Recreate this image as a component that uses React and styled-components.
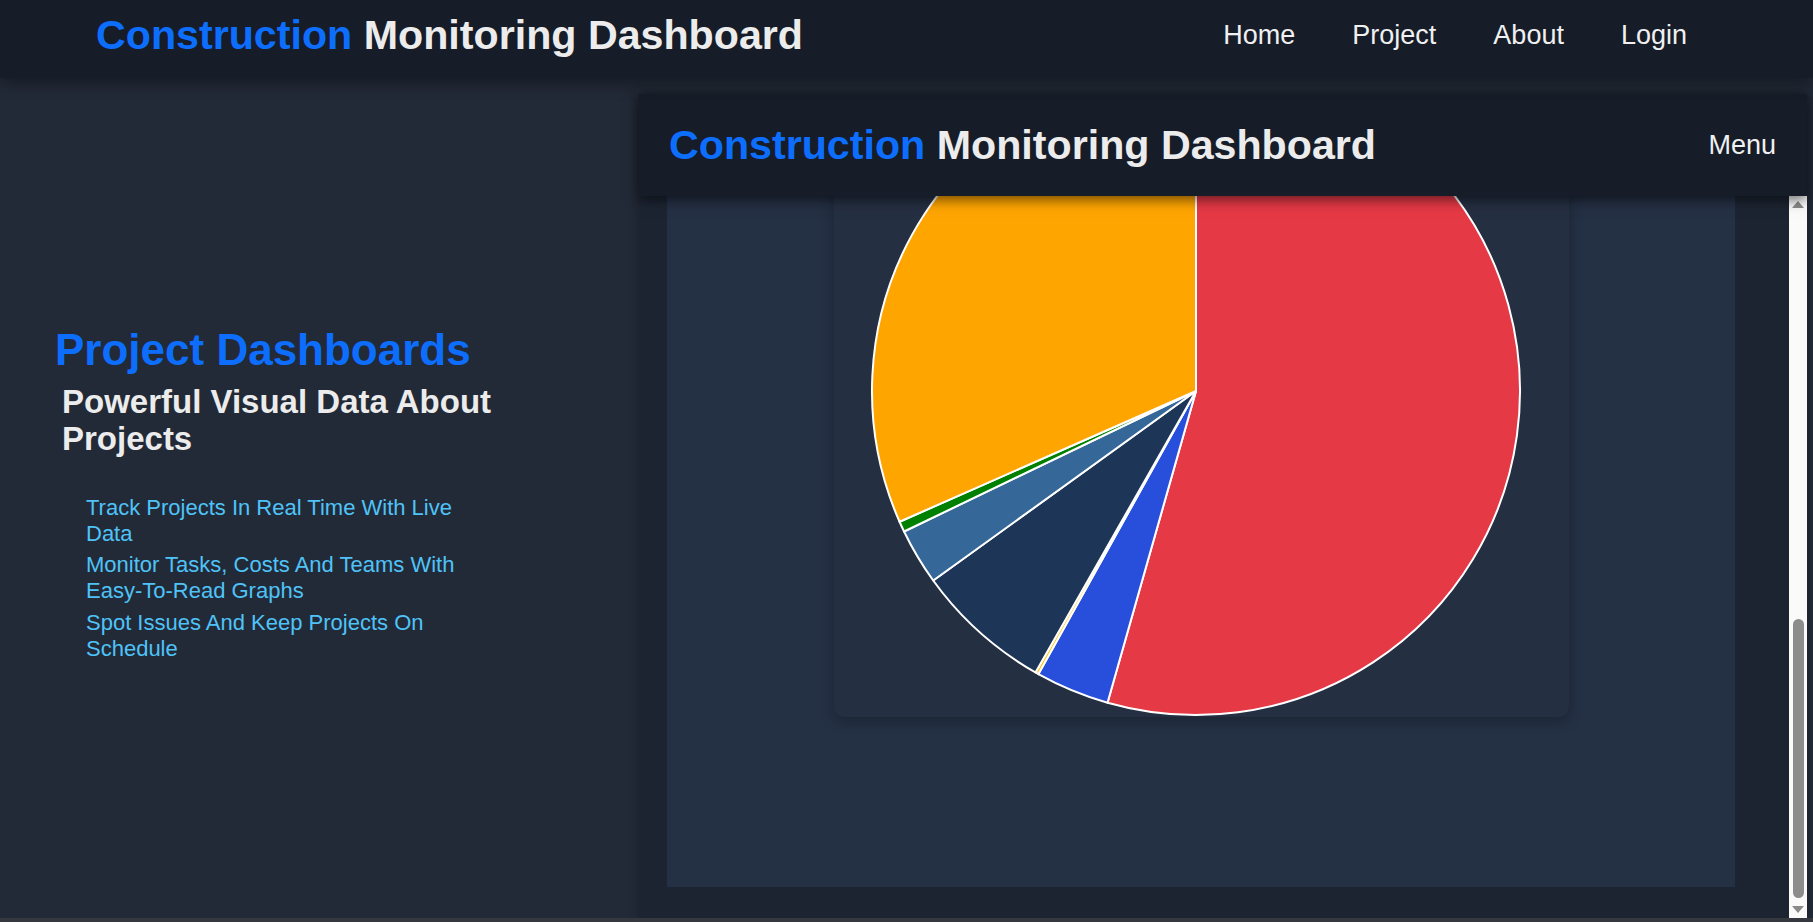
import React from 'react';
import styled, {createGlobalStyle} from 'styled-components';

const GlobalStyle = createGlobalStyle`
    html, body {
        margin: 0;
        padding: 0;
        height: 100%;
        overflow: hidden;
        background-color: #222a37;
        font-family: "Liberation Sans", Arial, Helvetica, sans-serif;
    }
    #root {
        height: 100%;
    }
`

const Page = styled.div`
    height: 100vh;
    display: flex;
    flex-direction: column;
`

const TopBar = styled.header`
    position: relative;
    z-index: 3;
    display: flex;
    justify-content: space-between;
    align-items: center;
    padding: 12px 126px 19px 96px;
    background-color: #161d29;
    box-shadow: 0 4px 16px rgba(0, 0, 0, 0.4);
`

const Brand = styled.h1`
    margin: 0;
    font-size: 41.2px;
    font-weight: bold;
    line-height: normal;
    color: #ececec;
    white-space: nowrap;
`

const Accent = styled.span`
    color: #0d6efd;
`

const NavList = styled.nav`
    display: flex;
    gap: 57px;
`

const NavLink = styled.a`
    font-size: 27px;
    line-height: 31px;
    color: #f0f0f0;
    text-decoration: none;
`

const Main = styled.main`
    flex: 1;
    min-height: 0;
    display: flex;
`

const Intro = styled.section`
    flex: none;
    width: 639px;
    box-sizing: border-box;
    padding: 247px 0 0 55px;
`

const Title = styled.h1`
    margin: 0;
    font-size: 44px;
    line-height: 50px;
    font-weight: bold;
    color: #0d6efd;
`

const Subtitle = styled.h2`
    margin: 8px 0 0 7px;
    max-width: 460px;
    font-size: 33px;
    line-height: 37px;
    font-weight: bold;
    color: #ececec;
`

const Features = styled.ul`
    list-style: none;
    margin: 38px 0 0 31px;
    padding: 0;
    width: 400px;
`

const Feature = styled.li`
    font-size: 22px;
    line-height: 25.7px;
    color: #4fc3f7;
    margin-bottom: 6px;
`

const Preview = styled.div`
    flex: 1;
    min-width: 0;
    margin: 16px 6px 0 0;
    display: flex;
    flex-direction: column;
    background-color: #1c2432;
    box-shadow: 0 0 10px rgba(0, 0, 0, 0.25);
`

const PreviewBar = styled.div`
    position: relative;
    z-index: 2;
    flex: none;
    height: 102px;
    display: flex;
    justify-content: space-between;
    align-items: center;
    padding: 0 31px 0 30px;
    background-color: #161d29;
    box-shadow: 0 4px 12px rgba(0, 0, 0, 0.55);
`

const MenuLabel = styled.span`
    font-size: 27px;
    line-height: 31px;
    color: #f0f0f0;
`

const PreviewBody = styled.div`
    flex: 1;
    min-height: 0;
    display: flex;
`

const Viewport = styled.div`
    flex: 1;
    min-width: 0;
    overflow: hidden;
    display: flex;
    flex-direction: column;
    justify-content: flex-end;
`

const ChartSection = styled.div`
    flex: none;
    margin: 0 54px 31px 28px;
    padding: 40px 0 170px;
    display: flex;
    justify-content: center;
    background-color: #243044;
`

const ChartCard = styled.div`
    width: 735px;
    box-sizing: border-box;
    padding: 20px 10px 0 0;
    display: flex;
    justify-content: center;
    background-color: #252f42;
    border-radius: 10px;
    box-shadow: 0 4px 14px rgba(0, 0, 0, 0.25);
`

const ScrollBar = styled.div`
    flex: none;
    width: 18px;
    box-sizing: border-box;
    padding: 5px 0;
    display: flex;
    flex-direction: column;
    align-items: center;
    background-color: #fafafa;
`

const Arrow = styled.div`
    width: 0;
    height: 0;
    border-left: 6px solid transparent;
    border-right: 6px solid transparent;
    ${props => props.$down
        ? 'border-top: 7px solid #8a8a8a;'
        : 'border-bottom: 7px solid #8a8a8a;'}
`

const Track = styled.div`
    flex: 1;
    display: flex;
    flex-direction: column;
    justify-content: flex-end;
    padding-bottom: 8px;
`

const Thumb = styled.div`
    width: 11px;
    height: ${props => props.$size}px;
    border-radius: 6px;
    background-color: #8c8c8c;
`

const BottomEdge = styled.div`
    flex: none;
    height: 4px;
    background-color: #35393f;
`

//slice sizes in degrees, clockwise from the top
const slices = [
    {deg: 195.85, color: '#e63946'},
    {deg: 13.25, color: '#284fdb'},
    {deg: 0.6, color: '#ffc107'},
    {deg: 24.5, color: '#1d3557'},
    {deg: 10.1, color: '#356899'},
    {deg: 1.9, color: '#008000'},
    {deg: 113.8, color: '#ffa500'},
];

function point(r, deg) {
    const a = deg * Math.PI / 180;
    return [r * Math.sin(a), -r * Math.cos(a)];
}

function PieChart() {
    const r = 324;
    let start = 0;
    const paths = slices.map((s, i) => {
        const end = start + s.deg;
        const [x0, y0] = point(r, start);
        const [x1, y1] = point(r, end);
        const large = s.deg > 180 ? 1 : 0;
        const d = `M0 0 L${x0} ${y0} A${r} ${r} 0 ${large} 1 ${x1} ${y1} Z`;
        start = end;
        return <path key={i} d={d} fill={s.color} stroke="#ffffff" strokeWidth="2" strokeLinejoin="round" />;
    });
    return (
        <svg width="652" height="652" viewBox="-326 -326 652 652">
            {paths}
        </svg>
    );
}

function Logo() {
    return (
        <Brand><Accent>Construction</Accent> Monitoring Dashboard</Brand>
    );
}

export default function App() {
    return (
        <Page>
            <GlobalStyle />
            <TopBar>
                <Logo />
                <NavList>
                    <NavLink href="#">Home</NavLink>
                    <NavLink href="#">Project</NavLink>
                    <NavLink href="#">About</NavLink>
                    <NavLink href="#">Login</NavLink>
                </NavList>
            </TopBar>
            <Main>
                <Intro>
                    <Title>Project Dashboards</Title>
                    <Subtitle>Powerful Visual Data About Projects</Subtitle>
                    <Features>
                        <Feature>Track Projects In Real Time With Live Data</Feature>
                        <Feature>Monitor Tasks, Costs And Teams With Easy-To-Read Graphs</Feature>
                        <Feature>Spot Issues And Keep Projects On Schedule</Feature>
                    </Features>
                </Intro>
                <Preview>
                    <PreviewBar>
                        <Logo />
                        <MenuLabel>Menu</MenuLabel>
                    </PreviewBar>
                    <PreviewBody>
                        <Viewport>
                            <ChartSection>
                                <ChartCard>
                                    <PieChart />
                                </ChartCard>
                            </ChartSection>
                        </Viewport>
                        <ScrollBar>
                            <Arrow />
                            <Track>
                                <Thumb $size={279} />
                            </Track>
                            <Arrow $down />
                        </ScrollBar>
                    </PreviewBody>
                </Preview>
            </Main>
            <BottomEdge />
        </Page>
    );
}
